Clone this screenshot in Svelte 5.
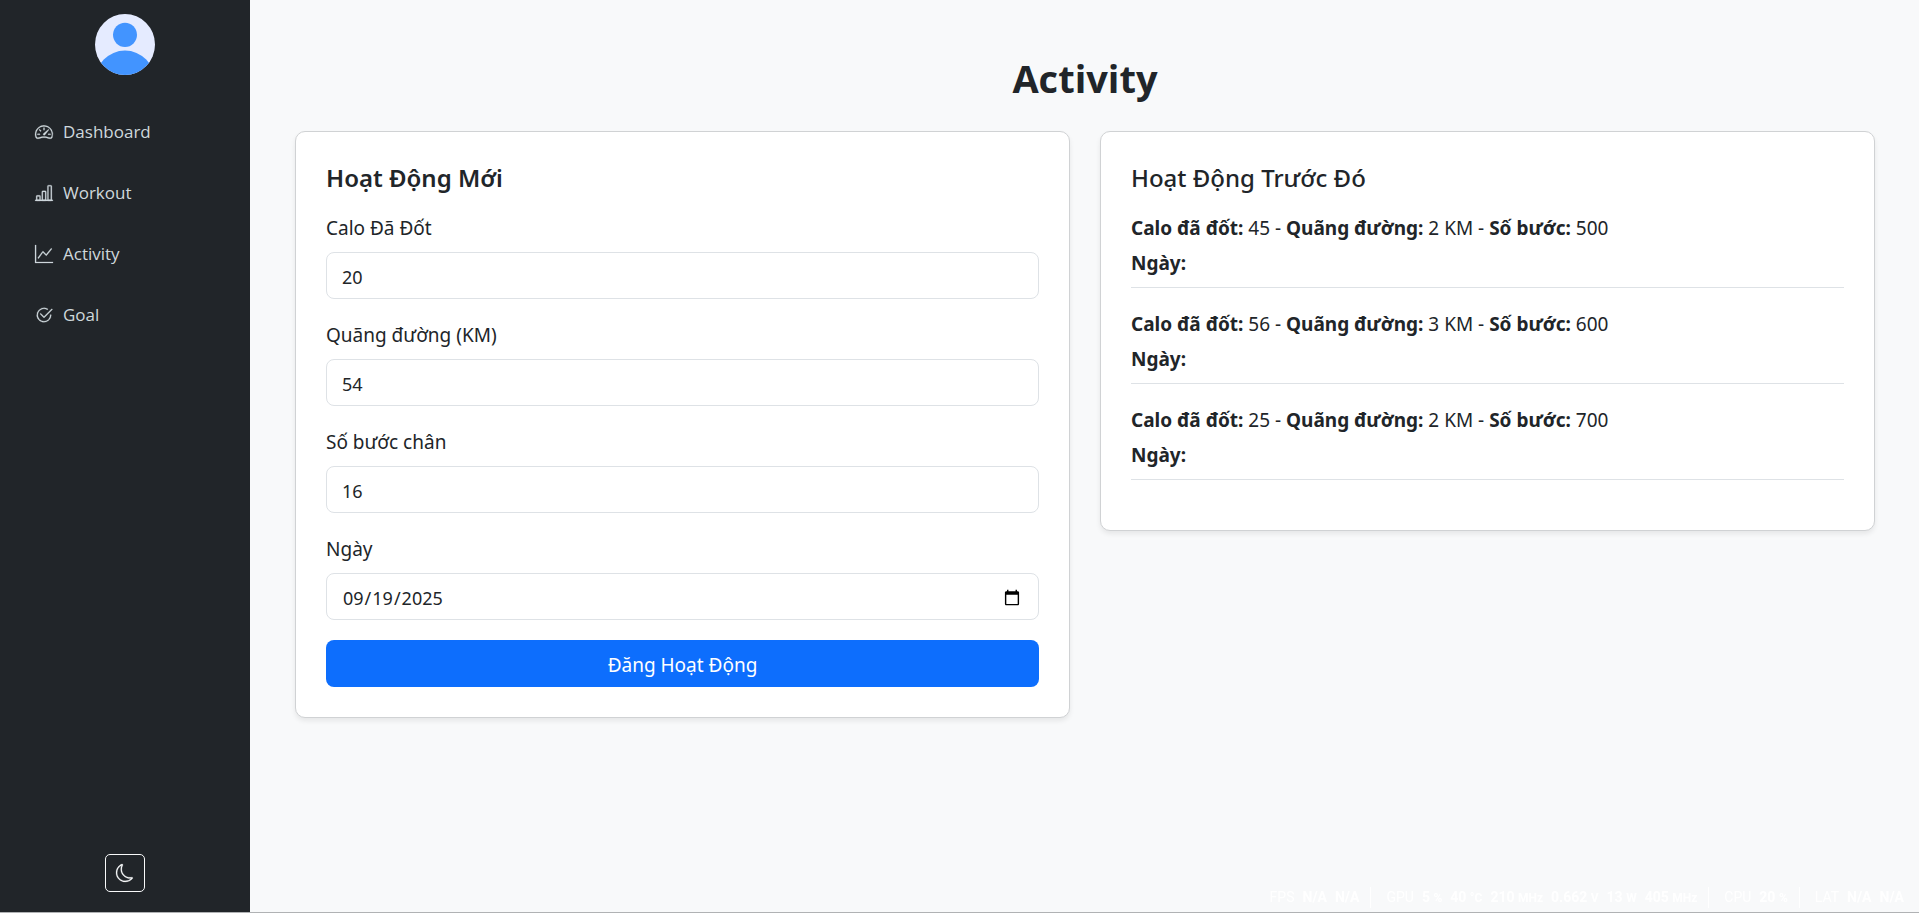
<script>
  let calories = $state(20);
  let distance = $state(54);
  let steps = $state(16);
  let date = $state('2025-09-19');

  const links = [
    { label: 'Dashboard', icon: 'speed' },
    { label: 'Workout', icon: 'bars' },
    { label: 'Activity', icon: 'graph' },
    { label: 'Goal', icon: 'check' },
  ];

  const activities = [
    { calories: 45, distance: 2, steps: 500 },
    { calories: 56, distance: 3, steps: 600 },
    { calories: 25, distance: 2, steps: 700 },
  ];

  const paths = {
    speed: [
      'M8 4a.5.5 0 0 1 .5.5V6a.5.5 0 0 1-1 0V4.500A.5.5 0 0 1 8 4M3.732 5.732a.5.5 0 0 1 .707 0l.915.914a.5.5 0 1 1-.708.708l-.914-.915a.5.5 0 0 1 0-.707M2 10a.5.5 0 0 1 .5-.5h1.586a.5.5 0 0 1 0 1H2.500A.5.5 0 0 1 2 10m9.500 0a.5.5 0 0 1 .5-.5h1.500a.5.5 0 0 1 0 1H12a.5.5 0 0 1-.5-.5m.754-4.246a.39.39 0 0 0-.527-.020L7.547 9.310a.91.91 0 1 0 1.302 1.258l3.434-4.297a.39.39 0 0 0-.029-.518z',
      'M0 10a8 8 0 1 1 15.547 2.661c-.442 1.253-1.845 1.602-2.932 1.250C11.309 13.488 9.475 13 8 13c-1.474 0-3.310.488-4.615.911-1.087.352-2.490.003-2.932-1.250A8 8 0 0 1 0 10m8-7a7 7 0 0 0-6.603 9.329c.203.575.923.876 1.680.630C4.397 12.533 6.358 12 8 12s3.604.532 4.923.960c.757.245 1.477-.056 1.680-.631A7 7 0 0 0 8 3',
    ],
    bars: [
      'M4 11H2v3h2zm5-4H7v7h2zm5-5v12h-2V2zm-2-1a1 1 0 0 0-1 1v12a1 1 0 0 0 1 1h2a1 1 0 0 0 1-1V2a1 1 0 0 0-1-1zM6 7a1 1 0 0 1 1-1h2a1 1 0 0 1 1 1v7a1 1 0 0 1-1 1H7a1 1 0 0 1-1-1zm-5 4a1 1 0 0 1 1-1h2a1 1 0 0 1 1 1v3a1 1 0 0 1-1 1H2a1 1 0 0 1-1-1z',
      'M0 14.500a.5.5 0 0 1 .5-.5h15a.5.5 0 0 1 0 1H.5a.5.5 0 0 1-.5-.5',
    ],
    graph: [
      'M0 0h1v15h15v1H0zm14.817 3.113a.5.5 0 0 1 .070.704l-4.500 5.500a.5.5 0 0 1-.740.037L7.060 6.767l-3.656 5.027a.5.5 0 0 1-.808-.588l4-5.500a.5.5 0 0 1 .758-.060l2.609 2.610 4.150-5.073a.5.5 0 0 1 .704-.070',
    ],
    check: [
      'M2.500 8a5.500 5.500 0 0 1 8.250-4.764.5.5 0 0 0 .5-.866A6.500 6.500 0 1 0 14.500 8a.5.5 0 0 0-1 0 5.500 5.500 0 1 1-11 0',
      'M15.354 3.354a.5.5 0 0 0-.708-.708L8 9.293 5.354 6.646a.5.5 0 1 0-.708.708l3 3a.5.5 0 0 0 .708 0z',
    ],
  };
</script>

<div class="layout">
  <aside>
    <svg class="avatar" viewBox="0 0 60 60" preserveAspectRatio="none" role="img" aria-label="Avatar">
      <clipPath id="avatar-clip"><circle cx="30" cy="30" r="30" /></clipPath>
      <g clip-path="url(#avatar-clip)">
        <rect width="60" height="60" fill="#e5ebff" />
        <circle cx="30" cy="20.500" r="12" fill="#4294ff" />
        <circle cx="30" cy="66" r="30" fill="#4294ff" />
      </g>
    </svg>
    <nav>
      {#each links as link}
        <a href="#{link.label.toLowerCase()}">
          <svg viewBox="0 0 16 16" fill="currentColor" aria-hidden="true">
            {#each paths[link.icon] as d}<path {d} />{/each}
          </svg>
          {link.label}
        </a>
      {/each}
    </nav>
    <button class="theme" type="button" aria-label="Dark mode">
      <svg viewBox="0 0 16 16" fill="currentColor" aria-hidden="true">
        <path d="M6 .278a.77.77 0 0 1 .080.858 7.200 7.200 0 0 0-.878 3.460c0 4.021 3.278 7.277 7.318 7.277q.792-.001 1.533-.160a.79.79 0 0 1 .810.316.73.73 0 0 1-.031.893A8.350 8.350 0 0 1 8.344 16C3.734 16 0 12.286 0 7.710 0 4.266 2.114 1.312 5.124.060A.75.75 0 0 1 6 .278M4.858 1.311A7.270 7.270 0 0 0 1.025 7.710c0 4.020 3.279 7.276 7.319 7.276a7.320 7.320 0 0 0 5.205-2.162q-.506.063-1.029.063c-4.610 0-8.343-3.714-8.343-8.290 0-1.167.242-2.278.681-3.286" />
      </svg>
    </button>
  </aside>

  <main>
    <h1>Activity</h1>
    <div class="columns">
      <section class="card">
        <h2 class="strong">Hoạt Động Mới</h2>
        <form onsubmit={(e) => e.preventDefault()}>
          <div class="field">
            <label for="calories">Calo Đã Đốt</label>
            <input id="calories" type="number" bind:value={calories} />
          </div>
          <div class="field">
            <label for="distance">Quãng đường (KM)</label>
            <input id="distance" type="number" bind:value={distance} />
          </div>
          <div class="field">
            <label for="steps">Số bước chân</label>
            <input id="steps" type="number" bind:value={steps} />
          </div>
          <div class="field">
            <label for="date">Ngày</label>
            <input id="date" type="date" bind:value={date} />
          </div>
          <button class="submit" type="submit">Đăng Hoạt Động</button>
        </form>
      </section>

      <section class="card">
        <h2>Hoạt Động Trước Đó</h2>
        <ul>
          {#each activities as item}
            <li>
              <p><strong>Calo đã đốt:</strong> {item.calories} - <strong>Quãng đường:</strong> {item.distance} KM - <strong>Số bước:</strong> {item.steps}</p>
              <p><strong>Ngày:</strong></p>
            </li>
          {/each}
        </ul>
      </section>
    </div>
  </main>
</div>

<div class="stats">
  <div class="group"><span>FPS</span><b>N/A</b><b>N/A</b></div>
  <div class="group"><span>GPU</span><b>5 <small>%</small></b><b>40 <small>°C</small></b><b>210 <small>MHz</small></b><b>0.662 <small>V</small></b><b>13 <small>W</small></b><b>405 <small>MHz</small></b></div>
  <div class="group"><span>CPU</span><b>20 <small>%</small></b></div>
  <div class="group"><span>LAT</span><b>N/A</b><b>N/A</b></div>
</div>

<style>
  :global(body) {
    margin: 0;
    background: #f8f9fa;
  }

  .layout,
  .layout :global(*) {
    box-sizing: border-box;
  }

  .layout {
    display: flex;
    min-height: 100vh;
    border-bottom: 1px solid #b0b2b4;
    color: #212529;
    font: 19px/32px 'Segoe UI', 'Noto Sans', 'Open Sans', sans-serif;
  }

  aside {
    flex: 0 0 250px;
    display: flex;
    flex-direction: column;
    align-items: center;
    padding: 14px 0 20px;
    background: #212529;
  }

  .avatar {
    width: 60px;
    height: 61px;
  }

  nav {
    align-self: stretch;
    display: flex;
    flex-direction: column;
    gap: 1px;
    margin-top: 27px;
    padding: 0 15px;
  }

  nav a {
    display: flex;
    align-items: center;
    gap: 10px;
    padding: 14px 20px;
    color: #cfd8dc;
    font-family: 'Segoe UI', 'Open Sans', 'Noto Sans', sans-serif;
    font-size: 17px;
    text-decoration: none;
  }

  nav svg {
    width: 18px;
    height: 18px;
    overflow: visible;
    stroke: currentColor;
    stroke-width: 0.2;
  }

  .theme {
    display: grid;
    place-items: center;
    width: 40px;
    height: 38px;
    margin-top: auto;
    padding: 0;
    border: 1px solid #f8f9fa;
    border-radius: 5px;
    background: transparent;
    color: #f8f9fa;
  }

  .theme svg {
    width: 18px;
    height: 18px;
    overflow: visible;
    stroke: currentColor;
    stroke-width: 0.2;
  }

  main {
    flex: 1;
    min-width: 0;
    padding: 54px 44px 45px 45px;
  }

  h1 {
    margin: 0 0 29px;
    font-family: 'Segoe UI', 'Open Sans', 'Noto Sans', sans-serif;
    font-size: 38px;
    line-height: 48px;
    font-weight: 700;
    text-align: center;
  }

  .columns {
    display: grid;
    grid-template-columns: 1fr 1fr;
    align-items: start;
    gap: 30px;
  }

  .card {
    padding: 30px;
    border: 1px solid #d0d2d4;
    border-radius: 10px;
    background: #fff;
    box-shadow: 0 3px 5px rgba(0, 0, 0, 0.075);
  }

  h2 {
    margin: 0 0 18px;
    font-size: 24px;
    line-height: 32px;
    font-weight: 500;
  }

  h2.strong {
    font-weight: 600;
  }

  .field {
    display: flex;
    flex-direction: column;
    gap: 8px;
    margin-bottom: 20px;
  }

  input {
    width: 100%;
    height: 47px;
    padding: 8px 15px 6px;
    border: 1px solid #dee2e6;
    border-radius: 8px;
    background: #fff;
    color: inherit;
    font: inherit;
    font-size: 18px;
    appearance: none;
  }

  input[type='number'] {
    appearance: textfield;
  }

  .submit {
    display: block;
    width: 100%;
    height: 47px;
    padding: 2px 15px 0;
    border: 0;
    border-radius: 8px;
    background: #0d6efd;
    color: #fff;
    font: inherit;
  }

  ul {
    margin: 0;
    padding: 0;
    list-style: none;
  }

  li {
    margin-bottom: 20px;
    padding-bottom: 8px;
    border-bottom: 1px solid #dee2e6;
  }

  p {
    margin: 0;
  }

  p + p {
    margin-top: 3px;
  }

  .stats {
    position: fixed;
    right: 15px;
    bottom: 5px;
    display: flex;
    gap: 11px;
    color: #fff;
    font: 14px/20px Roboto, sans-serif;
    pointer-events: none;
  }

  .group {
    display: flex;
    align-items: baseline;
    gap: 8px;
  }

  .group + .group {
    padding-left: 15px;
    border-left: 1px solid #fff;
  }

  .stats small {
    font-size: 12px;
  }
</style>
